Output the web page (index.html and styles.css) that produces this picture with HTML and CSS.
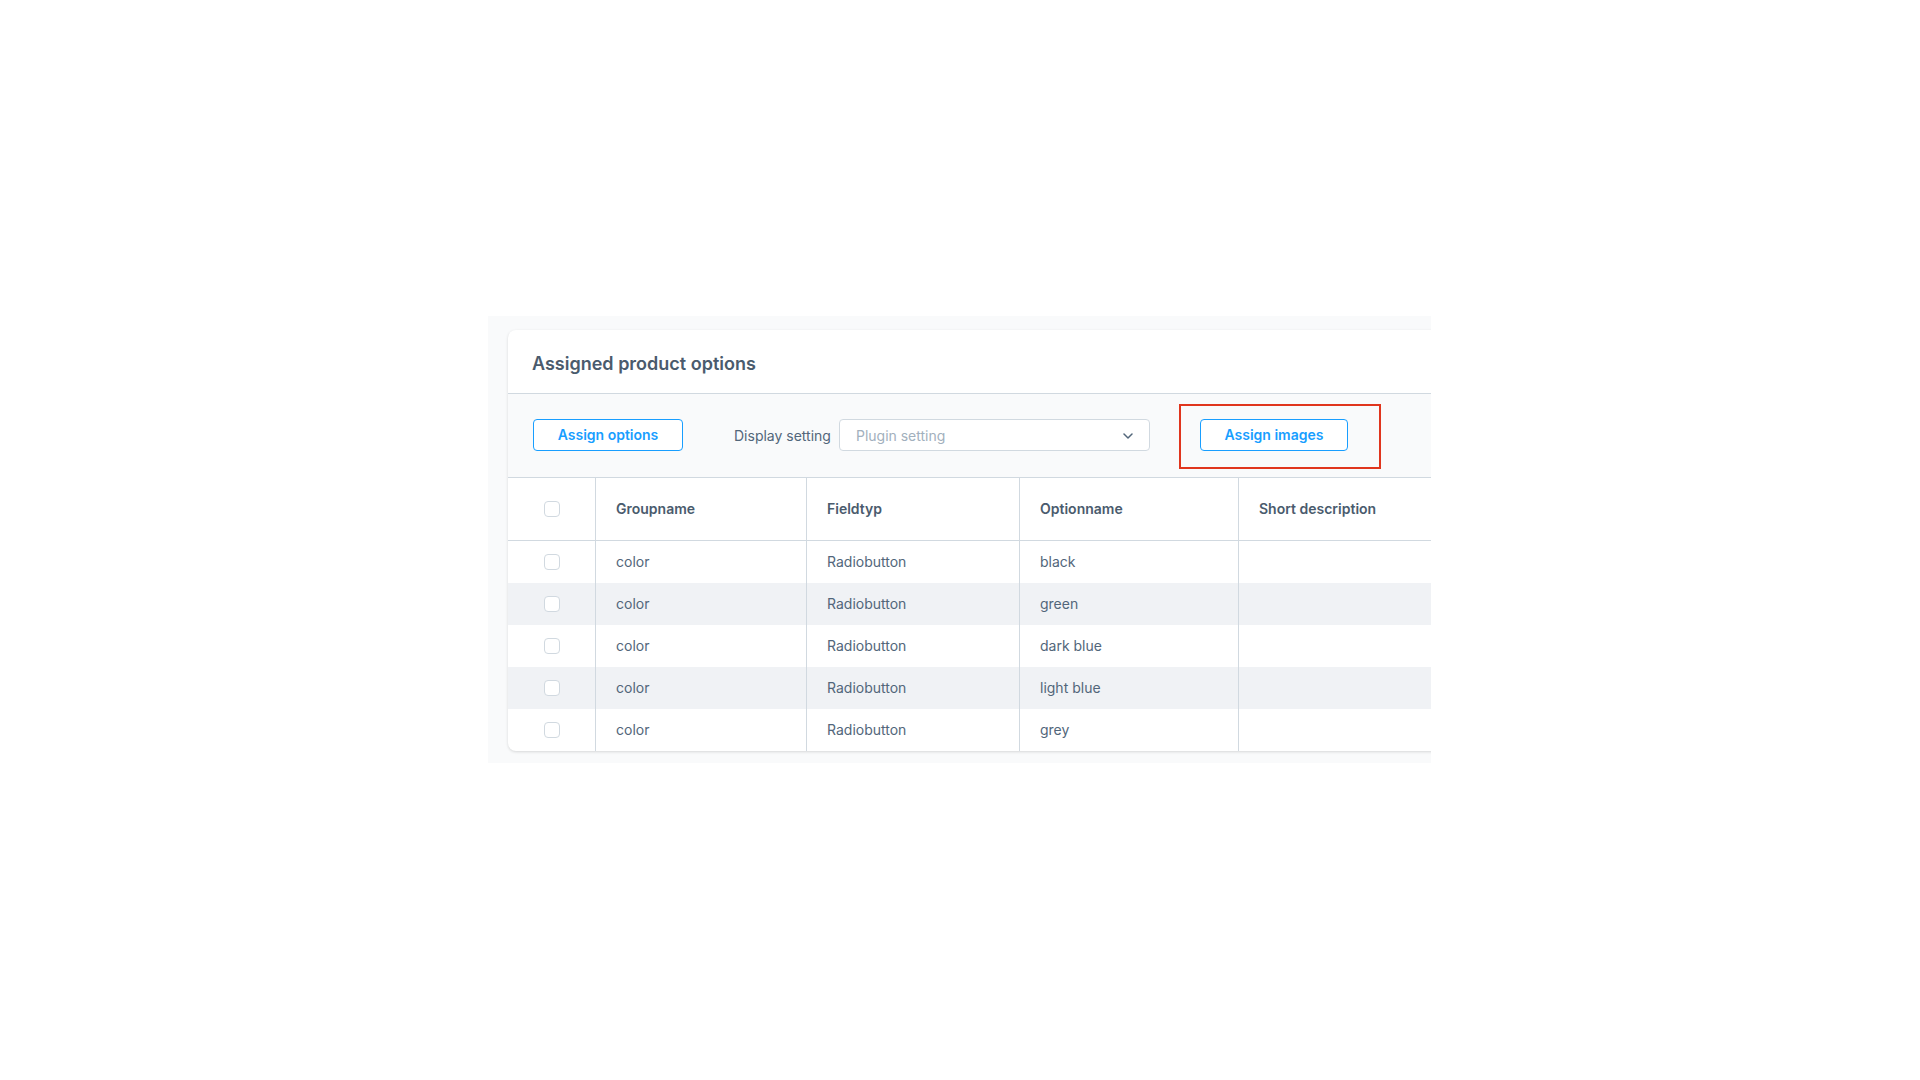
FILE: index.html
```html
<!DOCTYPE html>
<html lang="en">
<head>
<meta charset="utf-8">
<title>Assigned product options</title>
<link rel="stylesheet" href="styles.css">
</head>
<body>
<main class="panel">
  <section class="card">
    <header class="card-header">
      <h2 class="card-title">Assigned product options</h2>
    </header>
    <div class="toolbar">
      <button class="btn btn-options" type="button">Assign options</button>
      <label class="field-label">Display setting</label>
      <div class="select">
        <span class="select-placeholder">Plugin setting</span>
        <svg class="chevron" width="10" height="6" viewBox="0 0 10 6"><path d="M1 1l4 4 4-4" fill="none" stroke="#52667a" stroke-width="1.5" stroke-linecap="round" stroke-linejoin="round"/></svg>
      </div>
      <div class="highlight">
        <button class="btn btn-images" type="button">Assign images</button>
      </div>
    </div>
    <div class="grid">
      <div class="row head">
        <div class="cell check"><span class="box"></span></div>
        <div class="cell">Groupname</div>
        <div class="cell">Fieldtyp</div>
        <div class="cell">Optionname</div>
        <div class="cell last">Short description</div>
      </div>
      <div class="row">
        <div class="cell check"><span class="box"></span></div>
        <div class="cell">color</div>
        <div class="cell">Radiobutton</div>
        <div class="cell">black</div>
        <div class="cell last"></div>
      </div>
      <div class="row striped">
        <div class="cell check"><span class="box"></span></div>
        <div class="cell">color</div>
        <div class="cell">Radiobutton</div>
        <div class="cell">green</div>
        <div class="cell last"></div>
      </div>
      <div class="row">
        <div class="cell check"><span class="box"></span></div>
        <div class="cell">color</div>
        <div class="cell">Radiobutton</div>
        <div class="cell">dark blue</div>
        <div class="cell last"></div>
      </div>
      <div class="row striped">
        <div class="cell check"><span class="box"></span></div>
        <div class="cell">color</div>
        <div class="cell">Radiobutton</div>
        <div class="cell">light blue</div>
        <div class="cell last"></div>
      </div>
      <div class="row">
        <div class="cell check"><span class="box"></span></div>
        <div class="cell">color</div>
        <div class="cell">Radiobutton</div>
        <div class="cell">grey</div>
        <div class="cell last"></div>
      </div>
    </div>
  </section>
</main>
</body>
</html>
```

FILE: styles.css
```css
*, *::before, *::after { box-sizing: border-box; }

html, body {
  margin: 0;
  padding: 0;
  background: #ffffff;
  font-family: Inter, "Noto Sans", "Liberation Sans", sans-serif;
  color: #52667a;
}

.panel {
  margin: 316px 0 0 488px;
  width: 943px;
  height: 447px;
  padding: 14px 0 0 20px;
  background: #f9fafb;
  overflow: hidden;
}

.card {
  width: 1100px;
  height: 421px;
  background: #ffffff;
  border-radius: 8px 0 0 8px;
  box-shadow: 0 1px 3px rgba(0, 0, 0, 0.14);
  overflow: hidden;
}

.card-header {
  height: 64px;
  border-bottom: 1px solid #d1d9e0;
  display: flex;
  align-items: center;
  padding: 3px 24px 0;
}

.card-title {
  margin: 0;
  font-size: 18px;
  font-weight: 600;
  color: #4a5b6d;
}

.toolbar {
  height: 84px;
  background: #f9fafb;
  border-bottom: 1px solid #d1d9e0;
  display: flex;
  align-items: center;
  padding: 0 0 1px 25px;
}

.btn {
  height: 32px;
  padding: 0;
  border: 1px solid #189eff;
  border-radius: 4px;
  background: #ffffff;
  color: #189eff;
  font-family: Inter, "Noto Sans", sans-serif;
  font-size: 14px;
  font-weight: 600;
  line-height: 30px;
  white-space: nowrap;
  text-align: center;
  cursor: pointer;
}

.btn-options { width: 150px; }
.btn-images { width: 148px; }

.field-label {
  margin-left: 51px;
  margin-right: 8px;
  font-size: 14px;
  color: #52667a;
  white-space: nowrap;
}

.select {
  width: 311px;
  height: 32px;
  border: 1px solid #d1d9e0;
  border-radius: 4px;
  background: #ffffff;
  display: flex;
  align-items: center;
  justify-content: space-between;
  padding: 0 16px 0 16px;
}

.select-placeholder {
  font-size: 14px;
  color: #a2b0bd;
}

.chevron { display: block; margin-top: 1px; }

.highlight {
  position: relative;
  margin-left: 50px;
  display: flex;
}

.highlight::after {
  content: "";
  position: absolute;
  left: -21px;
  top: -15px;
  width: 202px;
  height: 65px;
  border: 2px solid #e0351d;
  pointer-events: none;
}

.grid { font-size: 14px; }

.row {
  display: grid;
  grid-template-columns: 88px 211px 213px 219px 1fr;
  height: 42px;
}

.row.head {
  height: 63px;
  border-bottom: 1px solid #d1d9e0;
  font-weight: 600;
  color: #4a5b6d;
}

.row.striped { background: #f0f2f5; }

.cell {
  display: flex;
  align-items: center;
  padding: 0 0 1px 20px;
  border-right: 1px solid #d1d9e0;
  white-space: nowrap;
}

.cell.last { border-right: none; }

.cell.check {
  justify-content: center;
  padding: 0 0 1px 1px;
}

.box {
  width: 16px;
  height: 16px;
  border: 1px solid #d1d9e0;
  border-radius: 4px;
  background: #ffffff;
}
```
